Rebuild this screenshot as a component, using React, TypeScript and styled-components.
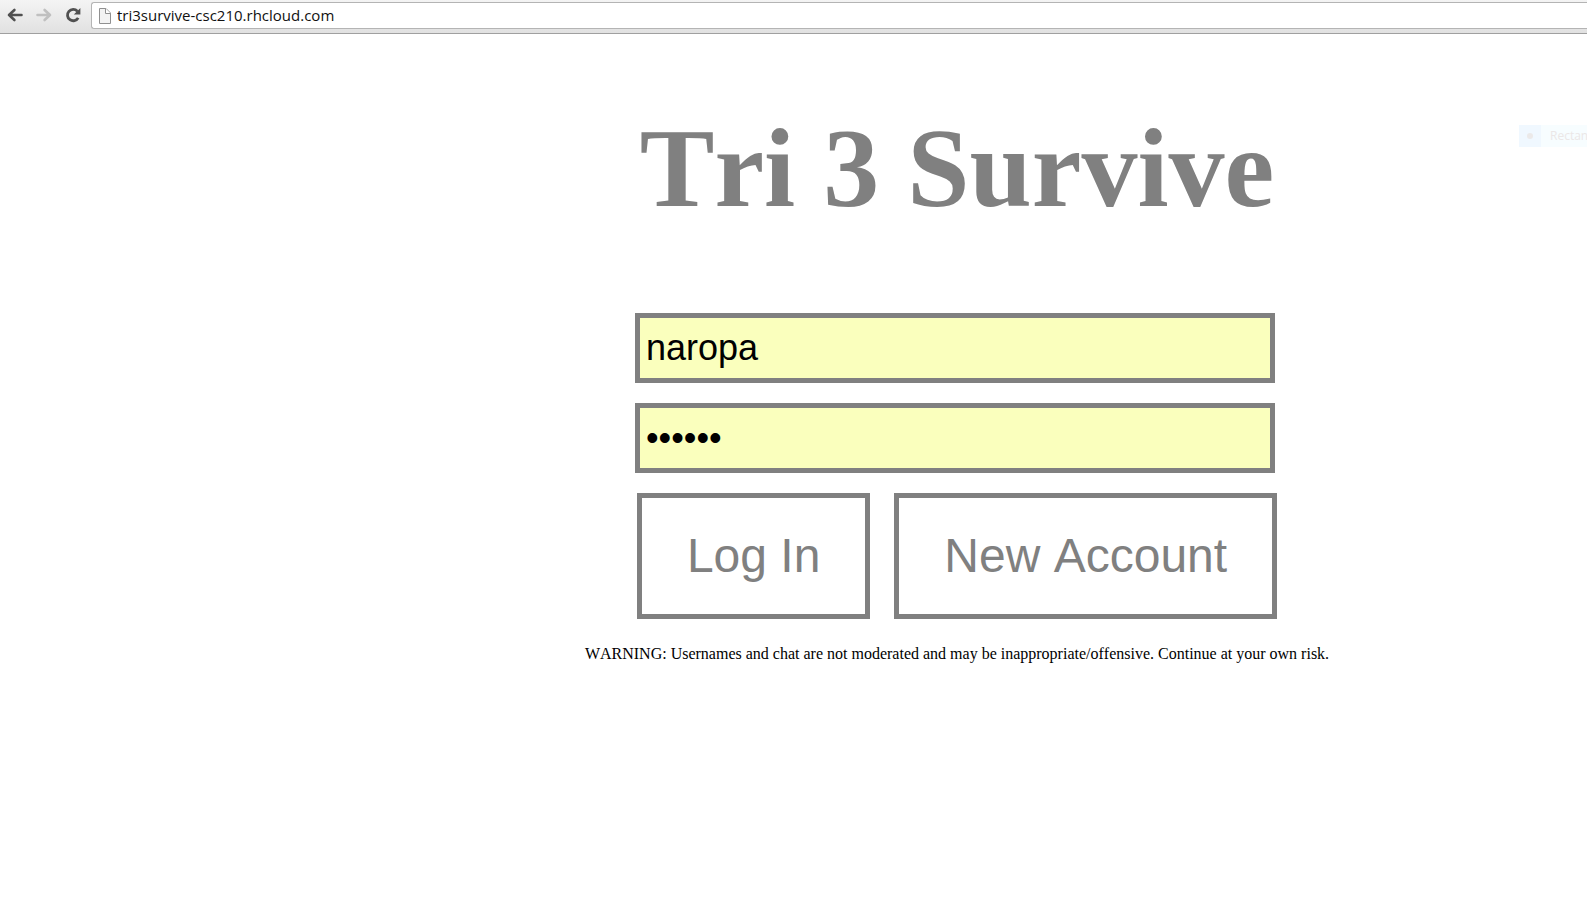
import React from "react";
import styled, { createGlobalStyle } from "styled-components";

const GlobalStyle = createGlobalStyle`
  * { box-sizing: border-box; }
  html { overflow: hidden; }
  body {
    margin: 0;
    background: #fff;
    color: #000;
    font-family: "Liberation Serif", "Times New Roman", serif;
    font-kerning: none;
  }
`;

const Page = styled.div`
  position: relative;
  overflow: hidden;
  min-height: 100vh;
`;

const Toolbar = styled.header`
  display: flex;
  align-items: flex-start;
  height: 34px;
  padding-top: 2px;
  background: linear-gradient(#f4f4f4, #e1e1e1);
  border-bottom: 1px solid #a0a0a0;
`;

const NavButton = styled.button`
  display: flex;
  align-items: center;
  justify-content: center;
  width: 29px;
  height: 26px;
  padding: 0;
  border: 0;
  background: none;
`;

const AddressBar = styled.label`
  display: flex;
  flex: 1;
  align-items: center;
  gap: 5px;
  height: 27px;
  margin-left: 4px;
  padding-left: 6px;
  background: #fff;
  border: 1px solid #b4b4b4;
  border-right: 0;
  border-radius: 3px 0 0 3px;
`;

const Address = styled.input`
  flex: 1;
  min-width: 0;
  padding: 0 0 2px;
  border: 0;
  outline: 0;
  background: none;
  color: #111;
  font: 15px/20px "Open Sans", sans-serif;
`;

const Main = styled.main`
  display: flex;
  flex-direction: column;
  align-items: center;
  padding: 70px 0 0 327px;
`;

const Title = styled.h1`
  margin: 0 0 81px;
  color: #808080;
  font-size: 112px;
  line-height: 128px;
  white-space: nowrap;
  font-kerning: none;
`;

const LoginForm = styled.form`
  display: flex;
  flex-direction: column;
  align-items: center;
  gap: 20px;
`;

const Fields = styled.div`
  display: flex;
  flex-direction: column;
  gap: 20px;
  padding-right: 4px;
`;

const Field = styled.input`
  width: 640px;
  height: 70px;
  padding: 0 6px;
  border: 5px solid #808080;
  border-radius: 0;
  outline: 0;
  background: #faffbd;
  color: #000;
  font: 36px "Liberation Sans", Arial, sans-serif;
`;

const Actions = styled.div`
  display: flex;
  gap: 24px;
`;

const ActionButton = styled.button`
  padding: 30px 45px;
  border: 5px solid #808080;
  background: #fff;
  color: #808080;
  font: 48px/56px "Liberation Sans", Arial, sans-serif;
  font-kerning: none;
  white-space: nowrap;
`;

const Warning = styled.p`
  margin: 26px 0 0;
  font-size: 16px;
  line-height: 18px;
  white-space: nowrap;
`;

const ToolHint = styled.div`
  position: absolute;
  top: 125px;
  right: 0;
  display: flex;
  width: 68px;
  height: 22px;
  overflow: hidden;
  background: #f7fdff;
  color: #ebe7e7;
  font: 12px/21px "Open Sans", sans-serif;
`;

const HintMark = styled.span`
  display: flex;
  flex: none;
  align-items: center;
  justify-content: center;
  width: 22px;
  margin-right: 9px;
  background: #f0f8ff;

  &::before {
    content: "";
    width: 6px;
    height: 6px;
    border-radius: 50%;
    background: #ebe9e9;
  }
`;

const Arrow = ({ color, flip }: { color: string; flip?: boolean }) => (
  <svg width="16" height="14" viewBox="0 0 16 14" fill="none" stroke={color} strokeWidth="2.6" strokeLinecap="round" strokeLinejoin="round">
    {flip ? <path d="M1.5 7H14M8.6 2l5.4 5-5.4 5" /> : <path d="M14.5 7H2M7.4 2 2 7l5.4 5" />}
  </svg>
);

const Reload = () => (
  <svg width="16" height="16" viewBox="0 0 16 16" fill="none">
    <path d="M12.4 4.2A5.7 5.7 0 1 0 13.2 10.8" stroke="#505050" strokeWidth="2.8" />
    <path d="M15.4 1v6.6H8.8z" fill="#505050" />
  </svg>
);

const PageIcon = () => (
  <svg width="14" height="16" viewBox="0 0 14 16" stroke="#909090">
    <path d="M1.5 .5h6.500l4.500 4.500v10.500h-11z" fill="#f3f3f3" />
    <path d="M7.500 .5v5h5" fill="#fff" />
  </svg>
);

export default function App() {
  return (
    <Page>
      <GlobalStyle />
      <Toolbar>
        <NavButton aria-label="Back"><Arrow color="#505050" /></NavButton>
        <NavButton aria-label="Forward"><Arrow color="#c0c0c0" flip /></NavButton>
        <NavButton aria-label="Reload"><Reload /></NavButton>
        <AddressBar>
          <PageIcon />
          <Address aria-label="Address" defaultValue="tri3survive-csc210.rhcloud.com" />
        </AddressBar>
      </Toolbar>
      <Main>
        <Title>Tri 3 Survive</Title>
        <LoginForm onSubmit={(e) => e.preventDefault()}>
          <Fields>
            <Field aria-label="Username" defaultValue="naropa" />
            <Field aria-label="Password" type="password" defaultValue="secret" />
          </Fields>
          <Actions>
            <ActionButton type="submit">Log In</ActionButton>
            <ActionButton type="button">New Account</ActionButton>
          </Actions>
        </LoginForm>
        <Warning>
          WARNING: Usernames and chat are not moderated and may be inappropriate/offensive. Continue at your own risk.
        </Warning>
      </Main>
      <ToolHint><HintMark />Rectan</ToolHint>
    </Page>
  );
}
